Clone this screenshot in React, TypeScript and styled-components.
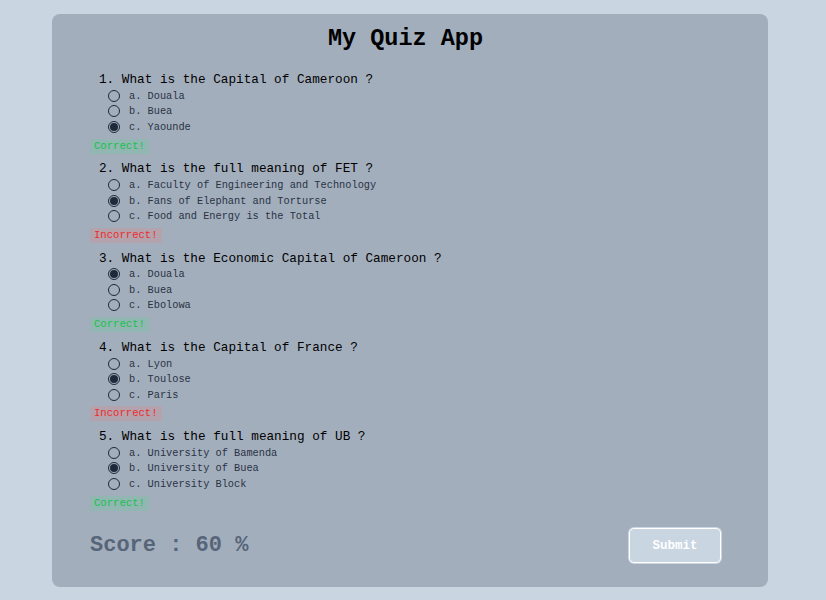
import React from 'react';
import styled, { createGlobalStyle } from 'styled-components';

const GlobalStyle = createGlobalStyle`
  body {
    margin: 0;
    background: #cad5e2;
    font-family: "Liberation Mono", "Courier New", monospace;
  }
`;

const Page = styled.div`
  padding: 14px 58px 13px 52px;
`;

const Card = styled.div`
  background: #a3aebc;
  border-radius: 8px;
  padding: 11px 47px 24px 38px;
`;

const Title = styled.h1`
  margin: 0 0 19px;
  font-size: 23.5px;
  line-height: 28px;
  font-weight: bold;
  text-align: center;
  color: #000;
`;

const QuestionBlock = styled.div`
  margin-bottom: 7.75px;
`;

const QuestionText = styled.p`
  margin: 0 0 0 9px;
  font-size: 12.7px;
  line-height: 16px;
  color: #000;
`;

const OptionList = styled.div`
  display: flex;
  flex-direction: column;
  margin: 0 0 4px 18px;
`;

const OptionRow = styled.label`
  display: flex;
  align-items: center;
  height: 15.5px;
  font-size: 10.3px;
  color: #283344;
`;

const Radio = styled.input`
  appearance: none;
  width: 12px;
  height: 12px;
  margin: 0 9px 0 0;
  border: 1px solid #1e293b;
  border-radius: 50%;
  display: grid;
  place-items: center;
  background: transparent;

  &:checked::after {
    content: '';
    width: 8px;
    height: 8px;
    border-radius: 50%;
    background: #1e293b;
  }
`;

const Badge = styled.div<{ $ok: boolean }>`
  width: fit-content;
  padding: 0 4px;
  height: 15px;
  line-height: 15px;
  font-size: 10.6px;
  color: ${p => (p.$ok ? '#16c24e' : '#ee2b2b')};
  background: ${p => (p.$ok ? 'rgba(74, 222, 128, 0.18)' : 'rgba(248, 113, 113, 0.2)')};
`;

const Footer = styled.div`
  display: flex;
  align-items: center;
  justify-content: space-between;
  margin-top: 17.5px;
`;

const Score = styled.div`
  font-size: 22px;
  font-weight: bold;
  color: #566579;
`;

const SubmitButton = styled.button`
  width: 92px;
  height: 35px;
  background: #cad5e2;
  border: 1.5px solid #fff;
  box-shadow: 0 0 0 1px #cbd5e1;
  border-radius: 5px;
  color: #fff;
  font-family: "Liberation Mono", "Courier New", monospace;
  font-size: 12.5px;
  font-weight: bold;
`;

const questions = [
  {
    q: '1. What is the Capital of Cameroon ?',
    options: ['a. Douala', 'b. Buea', 'c. Yaounde'],
    picked: 2,
    ok: true,
  },
  {
    q: '2. What is the full meaning of FET ?',
    options: ['a. Faculty of Engineering and Technology', 'b. Fans of Elephant and Torturse', 'c. Food and Energy is the Total'],
    picked: 1,
    ok: false,
  },
  {
    q: '3. What is the Economic Capital of Cameroon ?',
    options: ['a. Douala', 'b. Buea', 'c. Ebolowa'],
    picked: 0,
    ok: true,
  },
  {
    q: '4. What is the Capital of France ?',
    options: ['a. Lyon', 'b. Toulose', 'c. Paris'],
    picked: 1,
    ok: false,
  },
  {
    q: '5. What is the full meaning of UB ?',
    options: ['a. University of Bamenda', 'b. University of Buea', 'c. University Block'],
    picked: 1,
    ok: true,
  },
];

export default function App() {
  return (
    <Page>
      <GlobalStyle />
      <Card>
        <Title>My Quiz App</Title>
        {questions.map((item, qi) => (
          <QuestionBlock key={qi}>
            <QuestionText>{item.q}</QuestionText>
            <OptionList>
              {item.options.map((opt, oi) => (
                <OptionRow key={oi}>
                  <Radio type="radio" name={`q${qi}`} defaultChecked={oi === item.picked} />
                  {opt}
                </OptionRow>
              ))}
            </OptionList>
            <Badge $ok={item.ok}>{item.ok ? 'Correct!' : 'Incorrect!'}</Badge>
          </QuestionBlock>
        ))}
        <Footer>
          <Score>Score : 60 %</Score>
          <SubmitButton>Submit</SubmitButton>
        </Footer>
      </Card>
    </Page>
  );
}
